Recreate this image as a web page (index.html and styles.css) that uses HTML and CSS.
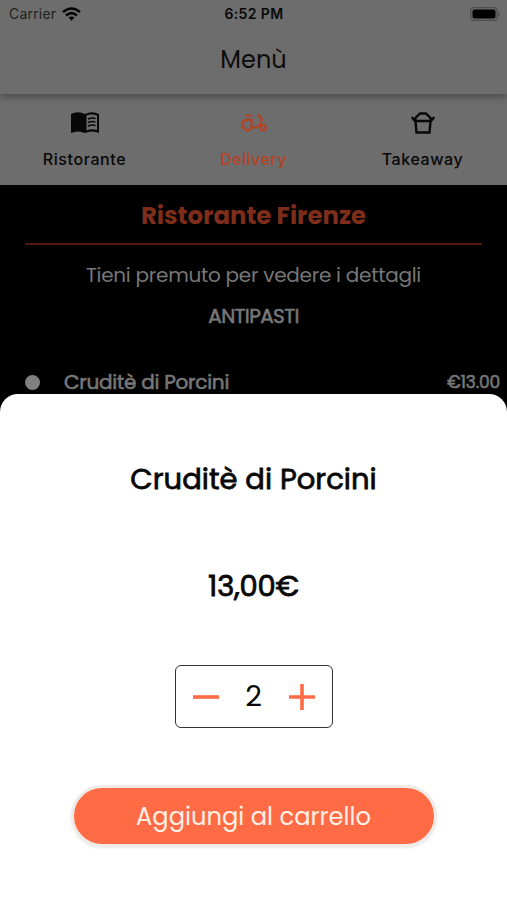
FILE: index.html
```html
<!DOCTYPE html>
<html lang="it">
<head>
<meta charset="utf-8">
<title>Menù</title>
<link rel="stylesheet" href="styles.css">
</head>
<body>
<div class="screen">
  <header class="header">
    <div class="status">
      <div class="carrier"><span>Carrier</span>
        <svg width="19" height="14" viewBox="0 0 19 14" fill="none" stroke="#050505" stroke-width="2.6"><path d="M1 5Q9.500-2 18 5M4 8.400Q9.500 4 15 8.400"/><path d="M6.500 10.500Q9.500 8.500 12.500 10.500L9.500 13.700Z" fill="#050505" stroke="none"/></svg>
      </div>
      <div class="time">6:52 PM</div>
      <svg class="battery" width="31" height="14" viewBox="0 0 31 14"><rect x=".7" y=".7" width="26.600" height="12.600" rx="3.500" fill="none" stroke="#4c4c4c" stroke-width="1.300"/><rect x="2.500" y="2.500" width="23" height="9" rx="2" fill="#000"/><path d="M28.500 4.500Q31 7 28.500 9.500Z" fill="#4c4c4c"/></svg>
    </div>
    <h1 class="title">Menù</h1>
  </header>
  <nav class="tabs">
    <div class="tab">
      <svg width="28" height="22" viewBox="0 0 28 22"><path d="M0 2Q7-1.500 14 2Q21-1.500 28 2V21Q21 18 14 21Q7 18 0 21Z" fill="#080808"/><path d="M15.500 3.500Q20.500 1.500 26 3.500V18Q20.500 16.500 15.500 18.500Z" fill="#6d6d6d"/><path d="M17 7Q21 5.300 24.500 6.500M17 10.500Q21 8.800 24.500 10M17 14Q21 12.300 24.500 13.500" fill="none" stroke="#080808" stroke-width="1.600"/></svg>
      <span>Ristorante</span>
    </div>
    <div class="tab active">
      <svg width="26" height="22" viewBox="0 0 26 22" fill="none" stroke="#b64224" stroke-width="2.200"><path d="M5 3.600H11"/><path d="M3.500 15.500H1.500V13Q1.500 7.800 6.500 7.800H10.500V15.500H15Q20.500 12 20.500 7.500Q20.500 3.600 16 3.600"/><path d="M3.800 15.500A3 3 0 0 0 9.800 15.500"/><circle cx="22" cy="15.800" r="2.700"/></svg>
      <span>Delivery</span>
    </div>
    <div class="tab">
      <svg width="24" height="22" viewBox="0 0 24 22" fill="none" stroke="#080808" stroke-width="2.400"><path d="M4.500 9L5.500 20.500H18.500L19.500 9M.8 5L4 9H20L23.200 5M4 8Q4.500 5 7 3.500L9 1.500H15L17 3.500Q19.500 5 20 8"/></svg>
      <span>Takeaway</span>
    </div>
  </nav>
  <main class="menu">
    <h2 class="restaurant"><span>Ristorante Firenze</span></h2>
    <p class="hint"><span>Tieni premuto per vedere i dettagli</span></p>
    <h3 class="category"><span>ANTIPASTI</span></h3>
    <div class="dish"><i class="dot"></i><span class="name">Cruditè di Porcini</span><span class="cost">€13.00</span></div>
  </main>
  <section class="sheet">
    <h2 class="product"><span>Cruditè di Porcini</span></h2>
    <div class="price"><span>13,00€</span></div>
    <div class="stepper">
      <svg width="26" height="26" viewBox="0 0 26 26"><path d="M0 13H26" stroke="#ff6b45" stroke-width="3.600"/></svg>
      <span class="count">2</span>
      <svg width="26" height="26" viewBox="0 0 26 26"><path d="M0 13H26M13 0V26" stroke="#ff6b45" stroke-width="3.600"/></svg>
    </div>
    <button class="add"><span>Aggiungi al carrello</span></button>
  </section>
</div>
</body>
</html>
```
FILE: styles.css
```css
* { box-sizing: border-box; }
body { margin: 0; }
h1, h2, h3, p { margin: 0; }
.screen {
  width: 507px; height: 900px; overflow: hidden;
  display: flex; flex-direction: column;
  background: #000;
  font-family: Poppins, Inter, "Open Sans", sans-serif;
}
.header { height: 94px; flex: none; background: #6d6d6d; z-index: 1; box-shadow: 0 2px 8px #444; }
.status {
  display: grid; grid-template-columns: 1fr 1fr 1fr; align-items: center;
  height: 27px; padding: 0 6px 0 9px;
  font-family: Inter, sans-serif;
}
.carrier { display: flex; gap: 6px; align-items: center; font-size: 14px; letter-spacing: .2px; color: #222; }
.time { text-align: center; font-size: 14px; font-weight: 600; letter-spacing: .4px; color: #080808; position: relative; left: -1px; }
.battery { justify-self: end; }
.title { text-align: center; font-size: 24px; line-height: 66px; font-weight: 400; color: #0c0c0c; }
.tabs {
  height: 91px; flex: none; display: grid; grid-template-columns: repeat(3, 1fr);
  padding: 18px 0 0; background: #6d6d6d;
  font: 500 16px/20px Inter, sans-serif; letter-spacing: .6px; color: #080808;
}
.tab { display: flex; flex-direction: column; align-items: center; gap: 15px; }
.active { color: #b64224; letter-spacing: .5px; }
.menu { height: 209px; flex: none; text-align: center; color: #777; }
.restaurant {
  height: 60px; margin: 0 25px; border-bottom: 2px solid #4d1b10;
  font-size: 24.4px; line-height: 62px; font-weight: 700; color: #7d2d19;
}
.hint { font-size: 20px; line-height: 60px; height: 60px; font-weight: 400; letter-spacing: -.27px; }
.category { font-size: 20px; line-height: 23px; height: 24px; font-weight: 400; -webkit-text-stroke: .6px; letter-spacing: -.6px; }
.dish { display: flex; align-items: center; height: 24px; margin-top: 41px; padding: 0 7px 0 25px; font-weight: 400; -webkit-text-stroke: .6px; }
.dot { width: 15px; height: 15px; border-radius: 50%; background: #808080; }
.name { margin-left: 24px; font-size: 20px; letter-spacing: -.25px; }
.cost { margin-left: auto; font-size: 17px; letter-spacing: -.2px; }
.sheet {
  flex: 1; z-index: 2; display: flex; flex-direction: column; align-items: center;
  background: #fff; border-radius: 18px 18px 0 0; padding-top: 65px; color: #080808;
}
.product { font-size: 29px; line-height: 40px; font-weight: 400; -webkit-text-stroke: .8px; letter-spacing: .03px; }
.price { margin-top: 67px; font-size: 29px; line-height: 40px; font-weight: 400; -webkit-text-stroke: .8px; letter-spacing: -.2px; }
.stepper {
  margin-top: 59px; width: 158px; height: 63px; padding: 0 17px;
  display: flex; align-items: center; justify-content: space-between;
  border: 1.500px solid #333; border-radius: 6px;
}
.count { font-size: 29px; }
.add {
  margin-top: 57px; width: 366px; height: 62px; padding: 0;
  border: 3px solid #efebe7; border-radius: 31px; background: #ff6b45;
  box-shadow: 0 1px 3px #e8e8e8;
  color: #fff0e6; font: inherit; font-size: 24.2px;
}
```
